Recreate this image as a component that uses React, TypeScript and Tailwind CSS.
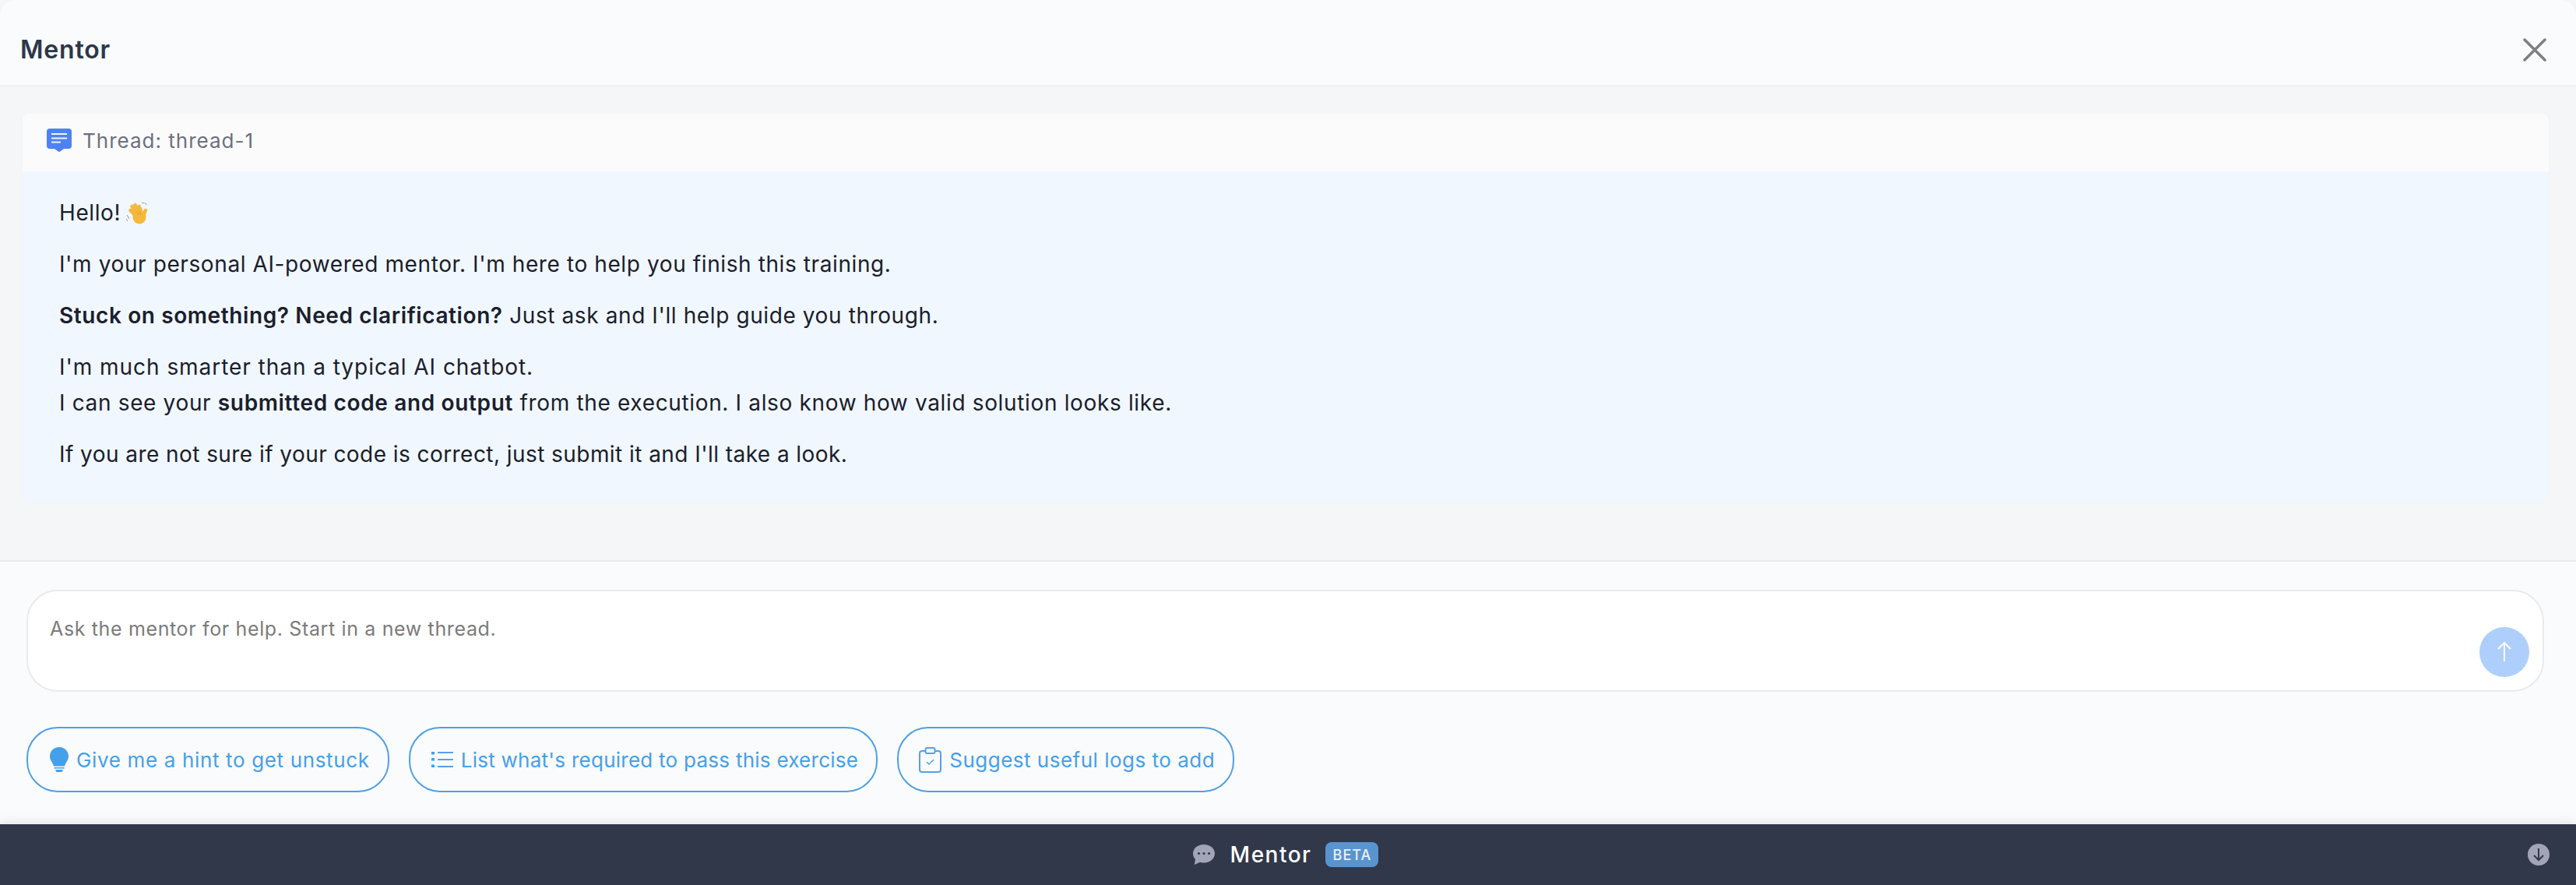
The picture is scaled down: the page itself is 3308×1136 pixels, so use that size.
import React from 'react';

const FONT = "font-['Inter','Noto_Sans',sans-serif]";

const CloseIcon = () => (
  <svg width="30" height="30" viewBox="0 0 30 30" className="shrink-0">
    <path d="M2 2l26 26M28 2 2 28" stroke="#7d7f82" strokeWidth="3.500" strokeLinecap="round" />
  </svg>
);

const ThreadIcon = () => (
  <svg width="32" height="30" viewBox="0 0 32 30" className="shrink-0">
    <path d="M4 0h24a4 4 0 0 1 4 4v18a4 4 0 0 1-4 4h-6l-5 3.500a1.500 1.500 0 0 1-2 0L10 26H4a4 4 0 0 1-4-4V4a4 4 0 0 1 4-4z" fill="#4d82f3" />
    <path d="M6 7h20M6 12.500h20M6 17.500h12" stroke="#eef4ff" strokeWidth="2" />
  </svg>
);

const WaveHand = () => (
  <svg width="30" height="30" viewBox="0 0 30 30" className="inline-block align-[-6px] ml-[6px]">
    <g stroke="#f3b83c" strokeWidth="4.500" strokeLinecap="round" fill="none">
      <path d="M13 18 6.500 11" />
      <path d="M15 15 8.500 6" />
      <path d="M18 14 12.500 4" />
      <path d="M21 14 17.500 6" />
      <path d="M23 18l3-7" />
    </g>
    <circle cx="18" cy="20" r="8.500" fill="#f3b83c" />
    <path d="M14 13l3 4M18 12l2 5" stroke="#d4962a" strokeWidth="0.800" fill="none" />
    <path d="M2 17l3 5M1 22l2 3M21 1l3 1M25 1l2 3" stroke="#9a9a9a" strokeWidth="1" fill="none" />
  </svg>
);

const BulbIcon = () => (
  <svg width="24" height="32" viewBox="0 0 24 32" className="shrink-0">
    <path d="M12 0C5 0 0 5 0 12c0 5 3.500 7 5 12.500h14C20.500 19 24 17 24 12 24 5 19 0 12 0z" fill="#45a0ea" />
    <path d="M5.500 26h13v1.500h-13zM7 29h10l-1.500 3h-7z" fill="#45a0ea" />
  </svg>
);

const ListIcon = () => (
  <svg width="28" height="20" viewBox="0 0 28 20" className="shrink-0">
    <path d="M8 1h20M8 10h20M8 19h20" stroke="#5c9fe6" strokeWidth="2" />
    <path d="M0 0h4v3.500H0zM0 8h4v3.500H0zM0 16.500h4V20H0z" fill="#45a0ea" />
  </svg>
);

const ClipboardIcon = () => (
  <svg width="29" height="33" viewBox="0 0 29 33" fill="none" className="shrink-0">
    <path d="M8 5H4a3 3 0 0 0-3 3v21a3 3 0 0 0 3 3h21a3 3 0 0 0 3-3V8a3 3 0 0 0-3-3h-4" stroke="#55a2e8" strokeWidth="2" />
    <rect x="8.500" y="1" width="12" height="7" rx="2" stroke="#55a2e8" strokeWidth="2" />
    <path d="m10 19 3 3 6-6" stroke="#55a2e8" strokeWidth="1.500" />
  </svg>
);

const ChatDots = () => (
  <svg width="28" height="26" viewBox="0 0 28 26" className="shrink-0">
    <path d="M14 0C6 0 0 5 0 11.500c0 3 1.200 5.500 3 7.500L1.800 26 9 22.800c1.600.5 3.200.7 5 .7 8 0 14-5.500 14-12S22 0 14 0z" fill="#a1a5b7" />
    <circle cx="7.500" cy="11.500" r="1.600" fill="#30384a" />
    <circle cx="14" cy="11.500" r="1.600" fill="#30384a" />
    <circle cx="20.500" cy="11.500" r="1.600" fill="#30384a" />
  </svg>
);

const SuggestionButton = ({ icon, label, className }: { icon: React.ReactNode; label: string; className: string }) => (
  <button className={`h-[84px] flex items-center gap-[10px] pr-[23px] rounded-[40px] border-2 border-[#4f9fe6] text-[#45a0ea] text-[26px] whitespace-nowrap ${className}`}>
    {icon}
    <span>{label}</span>
  </button>
);

export default function App() {
  return (
    <div className={`w-[3308px] h-[1136px] flex flex-col bg-[#f5f6f8] overflow-hidden ${FONT}`}>
      {/* Header */}
      <div className="h-[111px] shrink-0 flex items-center justify-between pl-[26px] pr-[38px] pt-[18px] bg-[#fafbfd] border-b-2 border-[#eef0f3] rounded-t-[20px]">
        <h2 className="text-[32px] font-semibold text-[#2d3748] tracking-[0.8px]">Mentor</h2>
        <CloseIcon />
      </div>

      {/* Thread */}
      <div className="flex-1 pt-[34px] pl-[28px] pr-[34px]">
        <div className="rounded-b-[16px] rounded-t-[8px] overflow-hidden border border-[#f3f4f6]">
          <div className="h-[74px] flex items-center gap-[14px] px-[31px] pb-[6px] bg-[#fbfbfb]">
            <ThreadIcon />
            <span className="text-[26px] text-[#6b7080] tracking-[1px]">Thread: thread-1</span>
          </div>
          <div className="h-[425px] bg-[#f1f7ff] px-[47px] pt-[30px] text-[28px] leading-[46px] tracking-[0.6px] text-[#1a202c] flex flex-col gap-[20px]">
            <p>Hello!<WaveHand /></p>
            <p>I'm your personal AI-powered mentor. I'm here to help you finish this training.</p>
            <p><b className="font-semibold">Stuck on something? Need clarification?</b> Just ask and I'll help guide you through.</p>
            <p><span className="tracking-[0.95px]">I'm much smarter than a typical AI chatbot.</span><br /><span className="tracking-[0.65px]">I can see your <b className="font-semibold">submitted code and output</b> from the execution. I also know how valid solution looks like.</span></p>
            <p className="tracking-[0.44px]">If you are not sure if your code is correct, just submit it and I'll take a look.</p>
          </div>
        </div>
      </div>

      {/* Composer */}
      <div className="h-[339px] shrink-0 bg-[#fafbfd] border-t-2 border-[#e8eaee] pl-[34px] pr-[41px] pt-[36px]">
        <div className="relative h-[131px] rounded-[40px] bg-white border-2 border-[#e8eaee] px-[28px] pt-[30px]">
          <span className="text-[25px] text-[#7b7b7b] tracking-[0.64px]">Ask the mentor for help. Start in a new thread.</span>
          <button className="absolute right-[17px] bottom-[17px] w-[64px] h-[64px] rounded-full bg-[#aecffc] flex items-center justify-center">
            <svg width="18" height="26" viewBox="0 0 18 26" fill="none">
              <path d="M9 1v24M1 9l8-8 8 8" stroke="#fff" strokeWidth="2" />
            </svg>
          </button>
        </div>
        <div className="flex gap-[25px] mt-[45px]">
          <SuggestionButton className="pl-[28px] tracking-[0.65px]" icon={<BulbIcon />} label="Give me a hint to get unstuck" />
          <SuggestionButton className="pl-[27px] tracking-[0.26px]" icon={<ListIcon />} label="List what's required to pass this exercise" />
          <SuggestionButton className="pl-[26px] tracking-[0.5px]" icon={<ClipboardIcon />} label="Suggest useful logs to add" />
        </div>
      </div>

      {/* Footer bar */}
      <div className="relative h-[78px] shrink-0 bg-[#30384a] flex items-center justify-center shadow-[0_-4px_12px_rgba(0,0,0,0.08)]">
        <div className="flex items-center mr-[6px]">
          <ChatDots />
          <span className="ml-[20px] text-[28px] font-medium text-white tracking-[1.500px]">Mentor</span>
          <span className="ml-[18px] w-[68px] h-[32px] flex items-center justify-center rounded-[8px] bg-[#5a94cf] text-[18px] font-medium text-[#e8f0fa] tracking-[1px]">BETA</span>
        </div>
        <div className="absolute right-[34px] w-[28px] h-[28px] rounded-full bg-[#a1a5b7] flex items-center justify-center">
          <svg width="16" height="18" viewBox="0 0 16 18" fill="none">
            <path d="M8 1v15M2 10l6 6 6-6" stroke="#30384a" strokeWidth="2" />
          </svg>
        </div>
      </div>
    </div>
  );
}
